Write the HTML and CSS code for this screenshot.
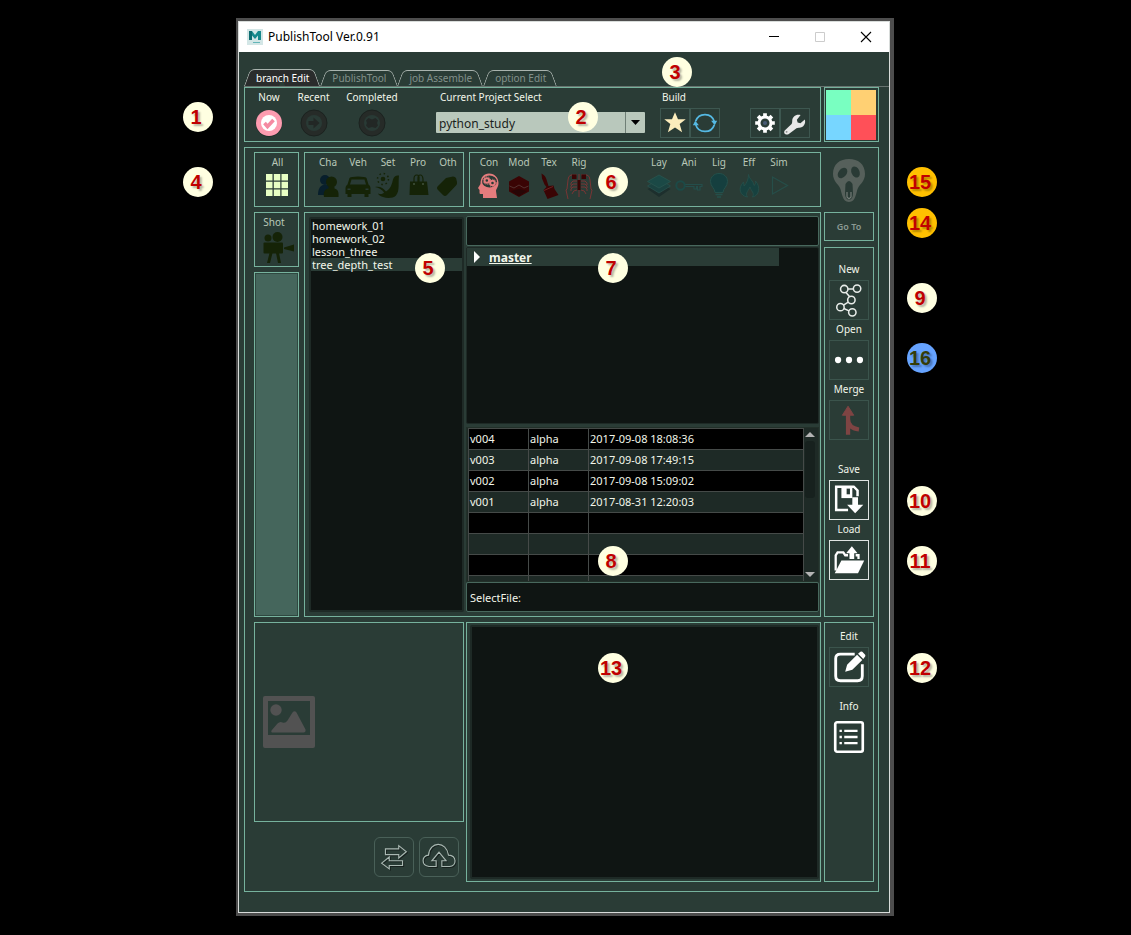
FILE: index.html
```html
<!DOCTYPE html>
<html lang="en">
<head>
<meta charset="utf-8">
<title>PublishTool Ver.0.91</title>
<link rel="stylesheet" href="styles.css">
</head>
<body>
<main class="stage">
<div class="frame">
<div class="window">
  <header class="titlebar">
    <svg class="app-icon" viewBox="0 0 16 16" aria-hidden="true"><rect width="16" height="16" fill="#d3e6e6"/><path d="M2 2h3l3 4 3-4h3v9h-3V6.500L8 10 5 6.500V11H2z" fill="#16898c"/><path d="M2 2h3v9H2z" fill="#0d6c70"/><path d="M6 13.500h7" stroke="#63b5b8"/></svg>
    <h1 class="title">PublishTool Ver.0.91</h1>
    <div class="win-controls">
      <button class="win-btn" aria-label="Minimize"><svg viewBox="0 0 12 12"><path d="M1 5.500h10" stroke="#000"/></svg></button>
      <button class="win-btn" aria-label="Maximize" disabled><svg viewBox="0 0 12 12"><path d="M1.500 1.500h9v9h-9z" stroke="#ccc" fill="none"/></svg></button>
      <button class="win-btn" aria-label="Close"><svg viewBox="0 0 12 12"><path d="M1 1l10 10M11 1L1 11" stroke="#000" fill="none" stroke-width="1.100"/></svg></button>
    </div>
  </header>

  <div class="body">
    <nav class="tabs">
      <button class="tab tab-active"><span>branch Edit</span></button>
      <button class="tab"><span>PublishTool</span></button>
      <button class="tab"><span>job Assemble</span></button>
      <button class="tab"><span>option Edit</span></button>
    </nav>

    <section class="top-row">
      <div class="box project-bar">
        <button class="state"><span>Now</span>
          <svg viewBox="0 0 28 28"><circle cx="14" cy="14.500" r="13.200" fill="#1c2925"/><circle cx="14" cy="14" r="13" fill="#fd9cb0"/><circle cx="14" cy="14" r="8" fill="#fff"/><path d="M9.500 14l3 3.500 6-6.500" fill="none" stroke="#f58aa2" stroke-width="3.600"/></svg></button>
        <button class="state"><span>Recent</span>
          <svg viewBox="0 0 28 28"><circle cx="14" cy="14" r="13" fill="#262b28" stroke="#1b221f"/><circle cx="14" cy="14" r="8" fill="#293a35"/><path d="M8.500 12h5V8.500l6 5.500-6 5.500V16h-5z" fill="#222725"/></svg></button>
        <button class="state state-wide"><span>Completed</span>
          <svg viewBox="0 0 28 28"><circle cx="14" cy="14" r="13" fill="#262b28" stroke="#1b221f"/><circle cx="14" cy="14" r="8" fill="#293a35"/><path d="M10.500 9l3.500 1.500L17.500 9l2.500 2.500-1 2.500 1 2.500-2.500 2.500-3.500-1-3.500 1L8 16.500 9 14l-1-2.500z" fill="#222725"/></svg></button>
        <div class="project">
          <label for="project">Current Project Select</label>
          <div class="combo">
            <select id="project"><option>python_study</option></select>
            <svg viewBox="0 0 20 21" aria-hidden="true"><path d="M0 0h1v21H0z" fill="#6f7f76"/><path d="M6 8h9l-4.500 5z" fill="#000"/></svg>
          </div>
        </div>
        <div class="build">
          <span>Build</span>
          <div class="pair">
            <button class="sq" aria-label="Favorite"><svg viewBox="0 0 30 30"><path d="M15 3.500l3.200 7.500h8.300l-6.500 5 2.600 9-7.600-5.300L7.400 25 10 16l-6.500-5h8.300z" fill="#fcedbc"/></svg></button>
            <button class="sq" aria-label="Refresh"><svg viewBox="0 0 30 30"><g fill="none" stroke="#55b9e3" stroke-width="1.800"><path d="M5 13a10.500 10.500 0 0 1 20 .5M25 17a10.500 10.500 0 0 1-20-.5"/></g><path d="M21.500 12.500h6.500L25.500 17.500zM2 17.500h6.500L4.500 12.500z" fill="#55b9e3"/></svg></button>
          </div>
        </div>
        <div class="pair">
          <button class="sq" aria-label="Settings"><svg viewBox="0 0 30 30"><g stroke="#fff" stroke-width="4"><path d="M15 4.500v21M4.500 15h21M7.600 7.600l14.800 14.800M22.400 7.600L7.600 22.400"/></g><circle cx="15" cy="15" r="8" fill="#fff"/><circle cx="15" cy="15" r="4.800" fill="#2a3c37"/><circle cx="15" cy="15" r="2.200" fill="#475a74"/></svg></button>
          <button class="sq" aria-label="Tools"><svg viewBox="0 0 30 30"><path d="M21 6.500l-4 5 .8 3 3 .8 4.700-4c1.500 4.500-1.500 9-6.500 8.700-2 0-3 .8-4.500 2.300L8 27c-2.500 1.500-6-1-4-4l6.500-6c1-1 1.500-2 1.500-4 0-5 4.500-8 9-6.500z" fill="#e8e8e8"/><circle cx="6" cy="24.500" r="1" fill="#888"/></svg></button>
        </div>
      </div>
      <div class="box swatch"><i class="mint"></i><i class="amber"></i><i class="sky"></i><i class="red"></i></div>
    </section>

    <section class="box workspace">
      <div class="row">
        <button class="box narrow kind"><span>All</span>
          <svg viewBox="0 0 28 28"><path d="M2 2h6.500v6.500H2zM9.800 2h6.500v6.500h-6.500zM17.500 2H24v6.500h-6.500zM2 9.800h6.500v6.500H2zM9.800 9.800h6.500v6.500h-6.500zM17.500 9.800H24v6.500h-6.500zM2 17.500h6.500V24H2zM9.800 17.500h6.500V24h-6.500zM17.500 17.500H24V24h-6.500z" fill="#e8ffc4"/></svg></button>
        <div class="box assets">
          <button class="kind"><span>Cha</span><svg viewBox="0 0 28 28"><g fill="#081f2c"><circle cx="11" cy="8" r="5"/><path d="M4 23c0-6 2-9 5-10h6v10z"/></g><g fill="#152307"><circle cx="17.500" cy="10" r="5.500"/><path d="M10 25c-1-5 1-8 4.500-8.500V15h6v1.500C24 17.500 25 20 24.500 25z"/></g></svg></button>
          <button class="kind"><span>Veh</span><svg viewBox="0 0 28 28"><path d="M5.500 6Q7 4.500 14 4.500T22.500 6l2 6.500q2 1 2 3.500v6h-2v3h-4v-3h-13v3h-4v-3h-2v-6q0-2.500 2-3.500z" fill="#152307"/><path d="M7.500 7.500h13l1.500 5H6z" fill="#293a35"/><path d="M3.500 16.500h3v1.500h-3zM21.500 16.500h3v1.500h-3z" fill="#293a35"/></svg></button>
          <button class="kind"><span>Set</span><svg viewBox="0 0 28 28"><g fill="#152307"><circle cx="9" cy="7" r="2.300"/><path d="M1 15c5-1 8 1 11 4.500 5-3 6-8 7-12 1-3 3-4.500 6-4-1 8 1 15-3 20-3 3-9 3-13 1.500-3-1-5-2.500-5-3.500 3 1 5 .5 6-1-2-3-5-4.500-9-5.500z"/></g><circle cx="9" cy="7" r="5.500" stroke="#152307" fill="none" stroke-width="1.500" stroke-dasharray="1.500 2.820"/></svg></button>
          <button class="kind"><span>Pro</span><svg viewBox="0 0 28 28"><path d="M6 9.500h17l1.500 13.500h-19z" fill="#152307"/><path d="M10 13V7q0-4 2.800-4T15 7v6M14 10V6q0-3 2.300-3T19 7v6" fill="none" stroke="#152307" stroke-width="1.200"/><path d="M10 11v2M19 11v2" stroke="#42533d" stroke-width="1.500"/></svg></button>
          <button class="kind"><span>Oth</span><svg viewBox="0 0 28 28"><path d="M12 6l7-1.500q2 0 3 1.500l1 4q.500 2-1 3.500L13 23q-2 2-4 0l-5-5q-2-2 0-4z" fill="#152307"/></svg></button>
        </div>
        <div class="box steps">
          <div class="step-group">
            <button class="kind"><span>Con</span><svg viewBox="0 0 28 28"><path d="M8 26v-4H5.500q-1 0-1-1.500v-2.500L3 16l2.500-4C5.500 5 9 1.500 14 1.500 20 1.500 23.500 6 23.500 11c0 4-2.500 6-2.500 8l1 7z" fill="#e57c7d"/><ellipse cx="14.500" cy="9.500" rx="7.500" ry="6" fill="#293a35"/><g fill="none" stroke="#e57c7d" stroke-width="2"><circle cx="11.800" cy="8.500" r="2.300"/><circle cx="17.500" cy="11" r="2.300"/></g><g fill="none" stroke="#e57c7d" stroke-dasharray="1 1.400"><circle cx="11.800" cy="8.500" r="3.800"/><circle cx="17.500" cy="11" r="3.700"/></g></svg></button>
            <button class="kind"><span>Mod</span><svg viewBox="0 0 28 28"><path d="M14 4l10 5.500v10L14 25 4 19.500v-10z" fill="#3a0404"/><path d="M14 17l8 2-8 5-8-5z" fill="#270606"/><path d="M4.500 14l4.500 2 5-3 5 3 4.500-2" fill="none" stroke="#54312f"/></svg></button>
            <button class="kind"><span>Tex</span><svg viewBox="0 0 28 28"><path d="M6.500 1.500q4 2 5 6l2 6.500 5-.5 1 3.500 4 6-11 4-4-9 3-3-2-2.500-2.500-6z" fill="#3a0404"/><path d="M9 18.500l9-4" stroke="#6b2020"/></svg></button>
            <button class="kind"><span>Rig</span><svg viewBox="0 0 28 28"><g fill="none" stroke="#793534" stroke-width="1"><path d="M14 2v23M12 3H6Q3 4 3 8l-1 9-1 1 2 9M16 3h6q3 1 3 5l1 9 1 1-2 9M12 9Q7 8 6 11v2M16 9q5-1 6 2v2M12 12q-5-1-6 2v2M16 12q5-1 6 2v2M12 15q-5-1-6 2v2M16 15q5-1 6 2v2M12 18q-4 0-5 4M16 18q4 0 5 4"/></g><path d="M7 2.500h4.500V7H7zM16.500 2.500H21V7h-4.500zM12.500 8h3v10h-3z" fill="#3a0404"/></svg></button>
          </div>
          <div class="step-group">
            <button class="kind"><span>Lay</span><svg viewBox="0 0 28 28"><path d="M14 11l11.500 6L14 25 2.500 17z" fill="#1d2f2d"/><path d="M14 7l11.500 7L14 21 2.500 14z" fill="#1b4240" stroke="#29504c" stroke-width=".8"/><path d="M14 3l11.500 6.500L14 16 2.500 9.500z" fill="#1b4946" stroke="#29554f" stroke-width=".8"/></svg></button>
            <button class="kind"><span>Ani</span><svg viewBox="0 0 28 28"><path d="M10 12.500h17v2h-2V18h-2.500v-3.500h-1V17H19v-2.500h-9" fill="#293a35" stroke="#244e4b" stroke-width="1.200"/><circle cx="5.500" cy="13.500" r="4.200" fill="none" stroke="#1c4a47" stroke-width="2"/></svg></button>
            <button class="kind"><span>Lig</span><svg viewBox="0 0 28 28"><path d="M14 1.500c5 0 8.500 3.500 8.500 8 0 5-4.500 7-4.500 11H10c0-4-4.500-6-4.500-11 0-4.500 3.500-8 8.500-8z" fill="#153f3f" stroke="#24504b"/><path d="M10.500 22.500h7M12 25h4" stroke="#24504b" stroke-width="1.500"/></svg></button>
            <button class="kind"><span>Eff</span><svg viewBox="0 0 28 28"><path d="M13.500 2.500c0 4 5 6 5.500 11 1.500-1 2-2 1.500-4.500C26 15 24 24 17.500 25c2.500-4-1.500-6-2.500-10-1 3-5.500 6-2.500 10C5 24 2.500 16 8.500 10l.5 4c3-3 4.500-7 4.500-11.500z" fill="#17413f" stroke="#26504b" stroke-width=".8"/></svg></button>
            <button class="kind"><span>Sim</span><svg viewBox="0 0 28 28"><path d="M7.500 5v17L22.500 13.500z" fill="none" stroke="#264e49" stroke-width="1.200"/></svg></button>
          </div>
        </div>
        <button class="ghost side" aria-label="Ghost"><svg viewBox="0 0 34 44"><path d="M17 1c9 0 16 5 16 15 0 7-5 10-7 14s-2 14-9 14-7-10-9-14S1 23 1 16C1 6 8 1 17 1z" fill="#56605b"/><g fill="#293a35"><ellipse cx="10.500" cy="15" rx="4" ry="5.800" transform="rotate(40 10.500 15)"/><ellipse cx="23.500" cy="14" rx="4" ry="5.800" transform="rotate(-25 23.500 14)"/><path d="M13.500 26q3.500-6 7 0l.5 9q0 6-4 7-4-1-4-7z"/></g><path d="M15 34v5l2 2 2-2v-5" fill="none" stroke="#727b76" stroke-width="1.200"/></svg></button>
      </div>

      <div class="row row-main">
        <div class="narrow col-left">
          <button class="box kind shot"><span>Shot</span>
            <svg viewBox="0 0 32 32"><g fill="#152307"><circle cx="6" cy="6" r="3.500"/><circle cx="15.500" cy="5" r="5"/><rect x="1.500" y="10.500" width="19.500" height="11" rx="1"/><path d="M22 15.500l10-3v7l-10-2.500zM7.500 21h3L8 31H5zM14 21h3l2 10h-3z"/></g></svg></button>
          <div class="box filler"></div>
        </div>
        <div class="box browser">
          <ul class="dark branch-list">
            <li>homework_01</li><li>homework_02</li><li>lesson_three</li><li class="selected">tree_depth_test</li>
          </ul>
          <div class="detail">
            <input class="field" aria-label="Search">
            <div class="dark tree">
              <div class="tree-item"><svg viewBox="0 0 8 12" aria-hidden="true"><path d="M1 0l6 6-6 6z" fill="#fff"/></svg><b>master</b></div>
            </div>
            <div class="versions">
              <div class="version-clip">
              <table>
                <colgroup><col class="c1"><col class="c2"><col></colgroup>
                <tr><td>v004</td><td>alpha</td><td>2017-09-08 18:08:36</td></tr>
                <tr><td>v003</td><td>alpha</td><td>2017-09-08 17:49:15</td></tr>
                <tr><td>v002</td><td>alpha</td><td>2017-09-08 15:09:02</td></tr>
                <tr><td>v001</td><td>alpha</td><td>2017-08-31 12:20:03</td></tr>
                <tr><td></td><td></td><td></td></tr>
                <tr><td></td><td></td><td></td></tr>
                <tr><td></td><td></td><td></td></tr>
                <tr><td></td><td></td><td></td></tr>
              </table>
              </div>
              <div class="scroll" aria-hidden="true">
                <svg viewBox="0 0 10 6"><path d="M0 6l5-5 5 5z" fill="#b4b4b4"/></svg>
                <i></i>
                <svg viewBox="0 0 10 6"><path d="M0 0l5 5 5-5z" fill="#b4b4b4"/></svg>
              </div>
            </div>
            <input class="field" aria-label="Selected file" value="SelectFile:">
          </div>
        </div>
        <div class="side col-right">
          <button class="box goto">Go To</button>
          <div class="box tools">
            <label for="t-new">New</label>
            <button class="tool" id="t-new"><svg viewBox="0 0 40 40"><g fill="none" stroke="#e8ece9" stroke-width="1.600"><circle cx="15" cy="8.500" r="3.900"/><circle cx="28.500" cy="8" r="3.900"/><circle cx="22.500" cy="20" r="3.900"/><circle cx="11" cy="27.500" r="3.900"/><circle cx="23.500" cy="33" r="3.900"/><path d="M19 8.300h5.600M16.800 12l3.900 4.600M19.200 22.200l-5 3.200M14.600 29l5.400 2.500"/></g></svg></button>
            <label for="t-open">Open</label>
            <button class="tool" id="t-open"><svg viewBox="0 0 40 40"><g fill="#fff"><circle cx="8.500" cy="20" r="3.300"/><circle cx="20" cy="20" r="3.300"/><circle cx="31.500" cy="20" r="3.300"/></g></svg></button>
            <label for="t-merge">Merge</label>
            <button class="tool" id="t-merge"><svg viewBox="0 0 40 40"><path d="M19 5.500l6 9.500H13z" fill="#7e4443" stroke="#7e4443" stroke-linejoin="round"/><path d="M19 13v22.500M19 19c0 7 4 10 11.500 11" fill="none" stroke="#7e4443" stroke-width="4.500"/></svg></button>
            <label class="group" for="t-save">Save</label>
            <button class="tool tool-on" id="t-save"><svg viewBox="0 0 40 40"><path d="M19 30.500H6.500V6H25l4 4v6" fill="none" stroke="#fff" stroke-width="2.600"/><path d="M12 6h11.500v12H12z" fill="#fff"/><path d="M17.500 8h3.500v6h-3.500z" fill="#293a35"/><path d="M23.500 17h6v8H35l-8.500 9-8.500-9h5.500z" fill="#fff"/></svg></button>
            <label for="t-load">Load</label>
            <button class="tool tool-on" id="t-load"><svg viewBox="0 0 40 40"><path d="M6 31V15l2-3h6l2 3h3M27 15h3v4" fill="none" stroke="#fff" stroke-width="2.400"/><path d="M12 20.500h24L29.500 34H5z" fill="#fff"/><path d="M20.500 19v-6H17l6-7.500 6 7.500h-3.500v6z" fill="#fff"/></svg></button>
          </div>
        </div>
      </div>

      <div class="row row-bottom">
        <div class="media">
          <div class="box preview"><svg viewBox="0 0 52 52" role="img" aria-label="No preview"><path fill-rule="evenodd" d="M2 0h48q2 0 2 2v48q0 2-2 2H2q-2 0-2-2V2q0-2 2-2zM5 5v34h42V5z" fill="#525252"/><circle cx="13" cy="14" r="5.700" fill="#525252"/><path d="M8.500 34.500l6-7q2.500-2.500 5-1 3 1 5-2l5-8q2-2.500 4 0l9 17q.500 3-2 3H10q-2.500 0-1.500-2z" fill="#525252"/></svg></div>
          <div class="media-actions">
            <button class="round" aria-label="Swap"><svg viewBox="0 0 40 40"><g fill="none" stroke="#17211e" stroke-width="1.300" transform="translate(1 1)"><path d="M11 11.500h14V8l8 6.500-8 6.500v-3.500H11zM29 24H15v-4l-8 6.500 8 6V29h14z"/></g><path d="M11 11.500h14V8l8 6.500-8 6.500v-3.500H11zM29 24H15v-4l-8 6.500 8 6V29h14z" fill="none" stroke="#a9b8b2" stroke-width="1.200"/></svg></button>
            <button class="round" aria-label="Upload"><svg viewBox="0 0 40 40"><g fill="none" stroke="#17211e" stroke-width="1.300" transform="translate(1 1)"><path d="M17 30H9.500C1 29 1.500 18.500 9 18c1-15 19-15 21 0 9 .5 9 11.500 1 12h-8v-6h4.500L20 15l-7.500 9H17z"/></g><path d="M17 30H9.500C1 29 1.500 18.500 9 18c1-15 19-15 21 0 9 .5 9 11.500 1 12h-8v-6h4.500L20 15l-7.500 9H17z" fill="none" stroke="#a9b8b2" stroke-width="1.200"/></svg></button>
          </div>
        </div>
        <div class="box notes-box"><textarea class="dark notes" aria-label="Notes"></textarea></div>
        <div class="side box tools tools-low">
          <label for="t-edit">Edit</label>
          <button class="tool" id="t-edit"><svg viewBox="0 0 40 40"><path d="M26 6.500H11Q6 6.500 6 11v18.500q0 5 5 5h18q5 0 5-5V17" fill="none" stroke="#fff" stroke-width="3"/><path d="M16 25l2-7.500L28.500 7l5.500 5.500L23.500 23zM29.500 6L32 4q1-.5 2 0l3 3q.5 1 0 2l-2 2.500z" fill="#fff"/></svg></button>
          <label class="group-s" for="t-info">Info</label>
          <button class="tool tool-flat" id="t-info"><svg viewBox="0 0 40 40"><rect x="5.500" y="4.500" width="29" height="31" rx="2" fill="none" stroke="#fff" stroke-width="2.800"/><path d="M15 13.500h14M15 20h14M15 26.500h14M10 13.500h2.500M10 20h2.500M10 26.500h2.500" stroke="#fff" stroke-width="2.400"/></svg></button>
        </div>
      </div>
    </section>
  </div>
</div>

<div class="pins">
  <span class="pin p1">1</span><span class="pin p2">2</span><span class="pin p3">3</span><span class="pin p4">4</span>
  <span class="pin p5">5</span><span class="pin p6">6</span><span class="pin p7">7</span><span class="pin p8">8</span>
  <span class="pin p9 out">9</span><span class="pin p10 out">10</span><span class="pin p11 out">11</span><span class="pin p12 out">12</span>
  <span class="pin p13">13</span><span class="pin p14 out gold">14</span><span class="pin p15 out gold">15</span><span class="pin p16 out blue">16</span>
</div>
</div>
</main>
</body>
</html>
```

FILE: styles.css
```css
:root {
  --bg: #2a3c36;
  --line: #76b29d;
  --dark: #0f1513;
  --text: #f2f6ea;
}

* { box-sizing: border-box; }

body {
  margin: 0;
  background: #000;
  color: var(--text);
  font: 10px/14px "Noto Sans", "Open Sans", sans-serif;
}

button, input, select, textarea {
  margin: 0;
  padding: 0;
  border: 0;
  background: none;
  color: inherit;
  font: inherit;
}

svg { display: block; }

.stage { padding: 18px 237px 19px 236px; }

.frame {
  position: relative;
  min-width: 658px;
  padding: 3px 4px 3px 2px;
  background: #4d4d4d;
}

.window { border: 1px solid #d8dcda; background: var(--bg); }

/* Title bar */
.titlebar {
  display: flex;
  align-items: center;
  height: 30px;
  padding-left: 8px;
  background: #fff;
  color: #000;
}
.app-icon { width: 16px; height: 16px; }
.title { margin: 0 0 0 5px; font-size: 12px; font-weight: 400; line-height: 16px; }
.win-controls { display: flex; margin-left: auto; }
.win-btn { display: grid; place-items: center; width: 46px; height: 28px; }
.win-btn svg { width: 12px; height: 12px; }

.body { padding: 17px 0 20px 5px; }

/* Tabs */
.tabs { display: flex; align-items: flex-end; height: 18px; border-bottom: 1px solid #68736f; }
.tab {
  position: relative;
  height: 16px;
  padding: 0 11px 0 12px;
  color: #82908a;
  white-space: nowrap;
}
.tab span { position: relative; z-index: 1; }
.tab::before, .tab::after {
  content: "";
  position: absolute;
  top: 0;
  bottom: 0;
  border-top: 1px solid #a9b3ae;
}
.tab::before {
  left: 3px;
  right: 50%;
  border-left: 1px solid #a9b3ae;
  border-top-left-radius: 5px;
  transform: skewX(-20deg);
}
.tab::after {
  left: 50%;
  right: 3px;
  border-right: 1px solid #a9b3ae;
  border-top-right-radius: 5px;
  transform: skewX(20deg);
}
.tab-active { height: 17px; color: #fff; }
.tab-active::before, .tab-active::after { background: #2a2c2c; }

.box { border: 1px solid var(--line); }

/* Project bar */
.top-row { display: flex; gap: 3px; height: 55px; padding-right: 10px; }
.project-bar { display: flex; flex: 1; padding: 2px 10px 0 11px; }
.state { display: flex; flex-direction: column; align-items: center; width: 26px; margin-right: 15px; }
.state svg { flex: none; width: 28px; height: 28px; margin-top: 5px; }
.state + .state { width: 33px; }
.state + .state-wide { width: 54px; margin-right: 37px; }
.project { flex: 1; }
.project label { display: block; padding-left: 4px; }
.combo { position: relative; margin-top: 8px; }
.combo select {
  display: block;
  width: 100%;
  height: 21px;
  padding: 3px 3px 0;
  border-radius: 1px;
  background: #b9c8bc;
  color: #1b1f1d;
  font-size: 12px;
  appearance: none;
}
.combo svg { position: absolute; top: 0; right: 0; width: 20px; height: 21px; pointer-events: none; }
.build { margin: 0 30px 0 15px; }
.build span { display: block; padding-left: 2px; margin-bottom: 4px; }
.pair { display: flex; align-self: flex-start; }
.project-bar > .pair { margin-top: 18px; }
.sq { width: 30px; height: 30px; border: 1px solid #3d5750; }
.sq svg { width: 28px; height: 28px; }

.swatch {
  display: grid;
  grid-template-columns: 1fr 1fr;
  width: 55px;
  padding: 2px 2px 1px 1px;
}
.mint { background: #79ffc1; }
.amber { background: #ffd073; }
.sky { background: #77d6ff; }
.red { background: #ff5058; }

/* Workspace */
.workspace {
  display: flex;
  flex-direction: column;
  gap: 5px;
  margin: 5px 10px 0 0;
  padding: 4px 4px 9px 9px;
}
.row { display: flex; height: 55px; }
.narrow { flex: none; width: 45px; margin-right: 5px; }
.side { flex: none; width: 50px; margin-left: 3px; }

.kind {
  display: flex;
  flex-direction: column;
  align-items: center;
  min-width: 30px;
  padding-top: 2px;
  color: #b9c8b8;
}
.kind svg { flex: none; width: 28px; height: 28px; margin-top: 3px; }
.narrow.kind { padding-left: 2px; }

.assets { display: flex; flex: none; width: 160px; margin-right: 5px; padding-left: 8px; }
.steps { display: flex; flex: 1; justify-content: space-between; padding: 0 26px 0 4px; }
.step-group { display: flex; }
.ghost { display: grid; place-items: center; }
.ghost svg { width: 34px; height: 44px; }

.row-main { height: 405px; }
.col-left { display: flex; flex-direction: column; gap: 5px; }
.shot { height: 55px; padding-left: 3px; }
.shot span { padding-right: 8px; }
.shot svg { width: 32px; height: 32px; }
.filler { flex: 1; background: #45665c; box-shadow: inset 0 0 0 1px #2f4840; }

.browser { display: flex; flex: 1; gap: 2px; padding: 3px 1px 4px 4px; }

.dark { background: var(--dark); border: 2px solid #1e2a26; border-radius: 2px; }

.branch-list {
  flex: none;
  width: 155px;
  margin: 1px 0 0;
  padding: 0;
  list-style: none;
  font-size: 11px;
  line-height: 13px;
}
.branch-list li { padding-left: 1px; }
.branch-list .selected { background: var(--bg); }

.detail { display: flex; flex: 1; flex-direction: column; min-width: 0; font-size: 11px; }
.field {
  height: 30px;
  padding: 0 3px;
  border: 1px solid #48685d;
  border-radius: 2px;
  background: var(--dark);
}
.tree { flex: 1; margin: 1px 0 3px; border-width: 1px; }
.tree-item {
  display: flex;
  align-items: center;
  gap: 8px;
  height: 18px;
  margin-right: 39px;
  padding: 0 6px;
  background: var(--bg);
  font-size: 12px;
  line-height: 18px;
}
.tree-item svg { width: 8px; height: 12px; }
.tree-item b { padding-top: 2px; text-decoration: underline; }

.versions {
  display: flex;
  height: 155px;
  border: 1px solid #223029;
  background: #1e2a26;
}
.version-clip { flex: 1; height: 153px; overflow: hidden; padding: 0 0 0 1px; }
.versions table { width: 100%; border-collapse: collapse; table-layout: fixed; }
.versions td { height: 21px; padding: 0 1px; border: 1px solid #454a48; line-height: 14px; }
.versions tr:nth-child(odd) { background: #000; }
.c1, .c2 { width: 60px; }
.scroll {
  display: flex;
  flex-direction: column;
  align-items: center;
  width: 14px;
  padding: 3px 2px 3px 0;
}
.scroll svg { flex: none; width: 10px; height: 6px; }
.scroll i { width: 10px; height: 57px; margin: 4px 0 auto; border-radius: 3px; background: #17211e; }

/* Tool column */
.col-right { display: flex; flex-direction: column; gap: 6px; }
.goto { height: 29px; color: #8a9a93; font-size: 9px; font-weight: 600; }
.tools { display: flex; flex: 1; flex-direction: column; align-items: center; padding-top: 10px; }
.tools label { height: 20px; line-height: 18px; }
.col-right .tools { padding-top: 12px; }
.tools .group { margin-top: 20px; }
.tools .group-s { margin-top: 10px; }
.tools .tool { flex: none; width: 40px; height: 40px; border: 1px solid #3b544c; }
.tools .tool svg { width: 38px; height: 38px; }
.tools .tool-on { border-color: #dfe5e2; }
.tools .tool-flat { border-color: transparent; }

/* Bottom */
.row-bottom { height: 260px; }
.media { flex: none; width: 210px; margin-right: 2px; }
.preview { display: flex; align-items: center; height: 200px; padding-left: 8px; }
.preview svg { width: 52px; height: 52px; }
.media-actions { display: flex; justify-content: flex-end; gap: 5px; padding: 15px 5px 0 0; }
.round { width: 40px; height: 40px; border: 1px solid #496058; border-radius: 6px; }
.round svg { width: 38px; height: 38px; }
.notes-box { display: flex; flex: 1; padding: 2px 1px 2px 3px; }
.notes { flex: 1; resize: none; }
.tools-low { flex: none; }
.row-bottom .tools-low { padding-top: 4px; }

/* Numbered callouts laid over the window */
.pin {
  position: absolute;
  width: 30px;
  height: 30px;
  padding-right: 4px;
  border-radius: 50%;
  background: #ffffe1;
  color: #c00000;
  font: bold 20px/30px "Liberation Sans", Arial, sans-serif;
  text-align: center;
  text-shadow: 2px 2px 2px rgba(0, 0, 0, .3);
}
.out { left: calc(100% + 13px); }
.gold { background: #ffc000; }
.blue { background: #66a3ff; color: #343c08; }
.p1 { left: -53px; top: 84px; }
.p2 { left: 332px; top: 84px; }
.p3 { left: 426px; top: 39px; }
.p4 { left: -53px; top: 149px; }
.p5 { left: 179px; top: 235px; }
.p6 { left: 362px; top: 149px; }
.p7 { left: 362px; top: 235px; }
.p8 { left: 362px; top: 528px; }
.p9 { top: 265px; }
.p10 { top: 468px; }
.p11 { top: 528px; }
.p12 { top: 635px; }
.p13 { left: 362px; top: 635px; }
.p14 { top: 190px; }
.p15 { top: 149px; }
.p16 { top: 325px; }
```
